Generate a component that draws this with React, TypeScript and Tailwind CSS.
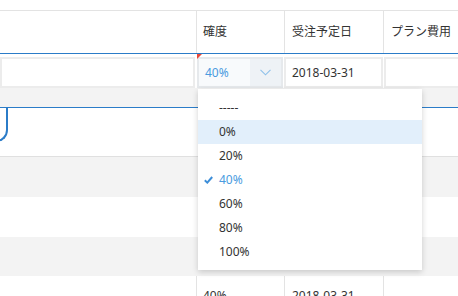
import React from "react";

const font = { fontFamily: '"Noto Sans", "Noto Sans CJK JP", sans-serif' };

function Cells({ children, cls = "" }: { children?: React.ReactNode[]; cls?: string }) {
  const c = children || [];
  return (
    <div className={`flex h-full ${cls}`}>
      <div className="w-[197px] shrink-0 border-r border-[#e3e3e3] flex items-center pl-[6px]">{c[0]}</div>
      <div className="w-[88px] shrink-0 border-r border-[#e3e3e3] flex items-center pl-[6px]">{c[1]}</div>
      <div className="w-[99px] shrink-0 border-r border-[#e3e3e3] flex items-center pl-[7px]">{c[2]}</div>
      <div className="flex-1 flex items-center pl-[7px]">{c[3]}</div>
    </div>
  );
}

const items = ["-----", "0%", "20%", "40%", "60%", "80%", "100%"];

export default function App() {
  return (
    <div className="relative w-[458px] h-[296px] overflow-hidden bg-white text-[12px] text-[#333]" style={font}>
      <div className="h-[11px] border-b border-[#e3e3e3]" />
      {/* header */}
      <div className="h-[42px]">
        <Cells>{["", "確度", "受注予定日", "プラン費用"]}</Cells>
      </div>
      <div className="h-px bg-[#2b7cc8]" />
      {/* edit row */}
      <div className="relative h-[34px] flex pt-[3px] bg-white">
        <div className="w-[195px] shrink-0 h-[31px] border-2 border-[#ececec] bg-white" />
        <div className="w-[2px] shrink-0" />
        <div className="w-[86px] shrink-0 h-[31px] flex border-2 border-[#e6e9ec] bg-[#f8fafc]">
          <div className="flex-1 flex items-center pl-[6px] text-[#4a9be0]">40%</div>
          <div className="w-[31px] flex items-center justify-center bg-[#eef2f6]">
            <svg width="11" height="7" viewBox="0 0 11 7">
              <path d="M0.5 0.8 L5.5 5.8 L10.5 0.8" fill="none" stroke="#8fc1ea" strokeWidth="1.1" />
            </svg>
          </div>
        </div>
        <div className="w-[1px] shrink-0" />
        <div className="w-[99px] shrink-0 h-[31px] flex items-center pl-[6px] border-2 border-[#ececec] bg-white">2018-03-31</div>
        <div className="w-[1px] shrink-0" />
        <div className="flex-1 h-[31px] border-2 border-r-0 border-[#ececec] bg-white" />
        <div className="absolute left-[197px] top-0 w-0 h-0 border-t-[5px] border-r-[5px] border-t-[#e8483a] border-r-transparent" />
      </div>
      <div className="h-[19px] bg-[#f3f3f3]" />
      <div className="h-px bg-[#2b7cc8]" />
      {/* rows */}
      <div className="relative h-[49px] border-b border-[#e0e0e0] bg-white">
        <div className="absolute left-[-10px] top-0 w-[18px] h-[34px] border-r-2 border-b-2 border-[#2b7cc8] rounded-br-[12px]" />
      </div>
      <div className="h-[40px] bg-[#f3f3f3]" />
      <div className="h-[40px] bg-white" />
      <div className="h-[39px] bg-[#f3f3f3]" />
      <div className="h-[40px] bg-white">
        <Cells>{["", "40%", "2018-03-31", ""]}</Cells>
      </div>
      {/* dropdown */}
      <div className="absolute left-[198px] top-[89px] w-[224px] h-[181px] bg-white shadow-[0_2px_6px_rgba(0,0,0,0.18)] pt-[7px]">
        {items.map((it) => (
          <div
            key={it}
            className={`relative h-[24px] flex items-center pl-[21px] ${it === "0%" ? "bg-[#e2effb]" : ""} ${it === "40%" ? "text-[#4a9be0]" : ""}`}
          >
            {it === "40%" && (
              <svg className="absolute left-[6px] top-[8px]" width="9" height="8" viewBox="0 0 9 8">
                <path d="M0.8 4.2 L3.3 6.6 L8.2 1" fill="none" stroke="#3d8ed8" strokeWidth="2" />
              </svg>
            )}
            {it}
          </div>
        ))}
      </div>
    </div>
  );
}
